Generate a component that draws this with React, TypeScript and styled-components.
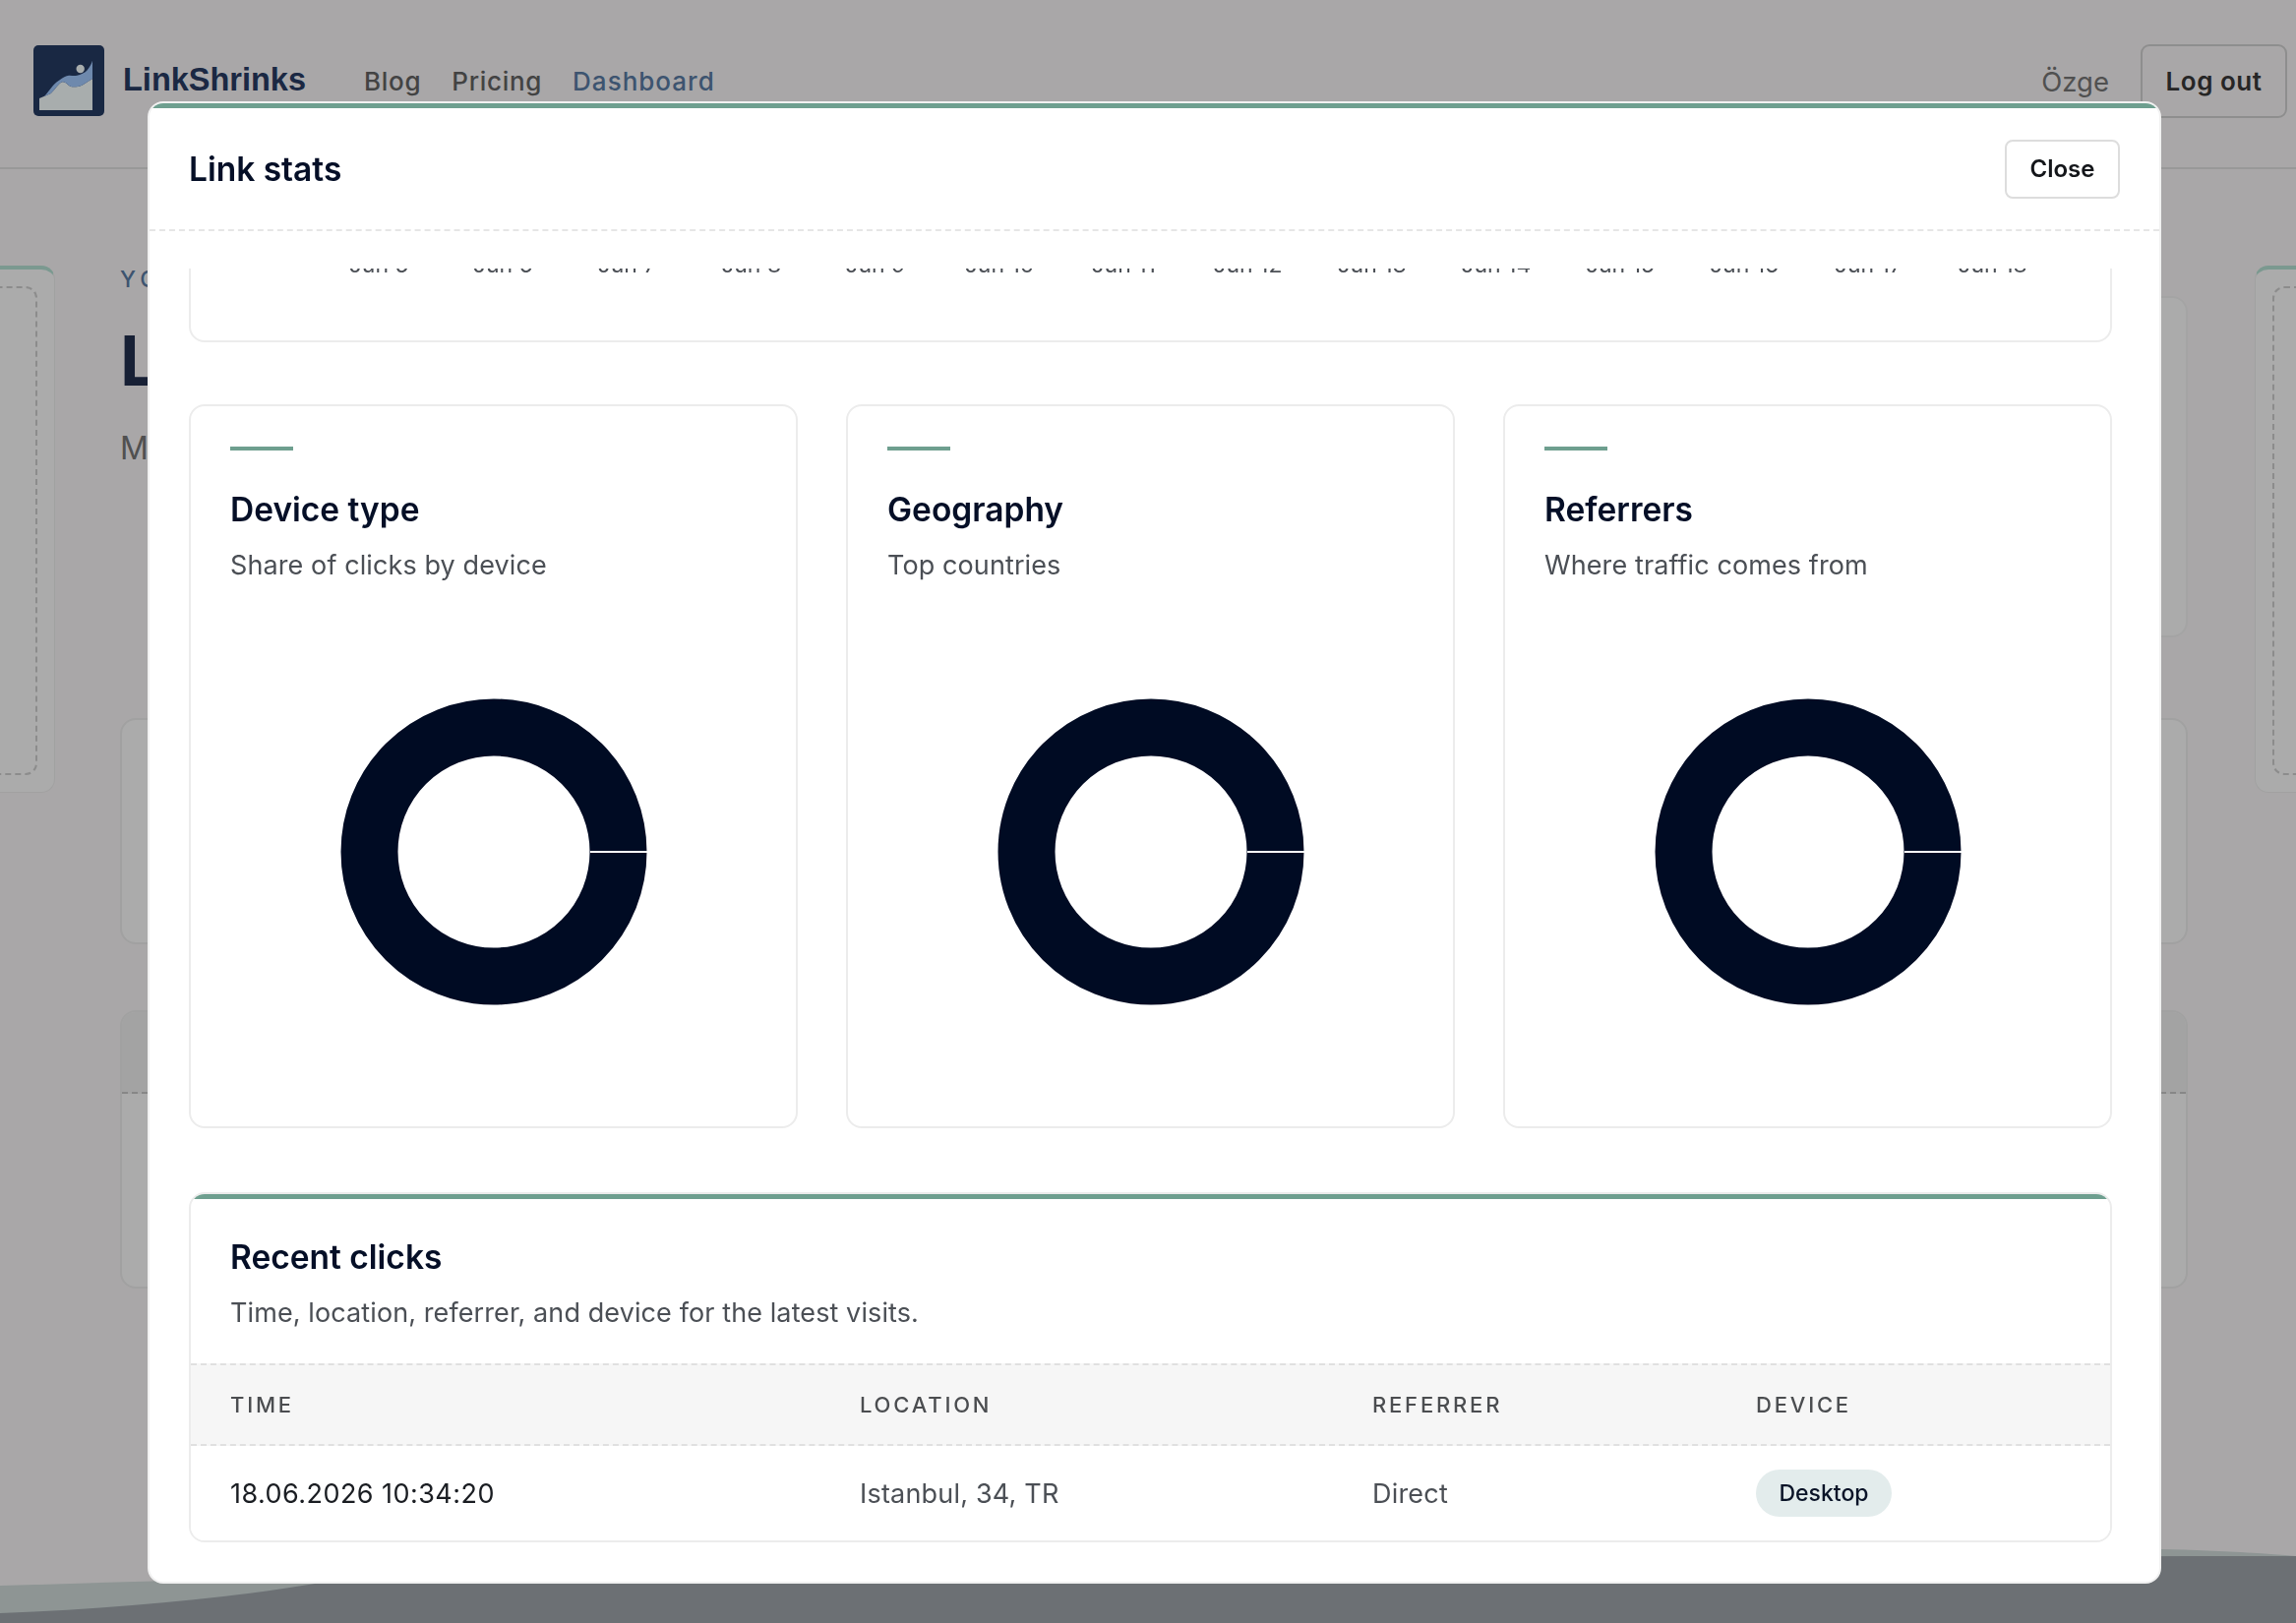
import * as React from 'react';
import styled, { createGlobalStyle } from 'styled-components';

const GlobalStyle = createGlobalStyle`
  html, body {
    margin: 0;
    padding: 0;
    background: #faf7f8;
  }

  body {
    font-family: Inter, "Noto Sans", sans-serif;
  }

  * {
    box-sizing: border-box;
  }
`;

const Page = styled.div`
  display: flex;
  flex-direction: column;
  width: 2334px;
  height: 1650px;
  overflow: hidden;
  background: #faf7f8;
`;

const Header = styled.header`
  display: flex;
  align-items: center;
  flex: none;
  height: 172px;
  padding: 0 9px 6px 34px;
  border-bottom: 2px solid #e1e1e1;
`;

const Brand = styled.div`
  display: flex;
  align-items: center;
  gap: 19px;
  margin-right: 59px;
`;

const BrandName = styled.span`
  margin-top: -2px;
  font-family: "Liberation Sans", Arial, sans-serif;
  font-size: 32.5px;
  font-weight: 700;
  color: #283b63;
`;

const Nav = styled.nav`
  display: flex;
  gap: 31px;
  margin-top: 1px;
  flex: 1;
`;

const NavLink = styled.a<{ $active?: boolean }>`
  font-size: 26px;
  font-weight: 500;
  letter-spacing: ${(p) => (p.$active ? '1px' : '0.7px')};
  color: ${(p) => (p.$active ? '#5b7ca5' : '#636363')};
`;

const UserName = styled.span`
  margin: 2px 32px 0 0;
  font-size: 27.5px;
  color: #767676;
`;

const LogoutButton = styled.button`
  width: 149px;
  height: 75px;
  border: 2px solid #d2d2d2;
  border-radius: 9px;
  background: transparent;
  font-family: inherit;
  font-size: 26px;
  font-weight: 600;
  letter-spacing: 0.5px;
  color: #383838;
`;

const Layout = styled.div`
  display: flex;
  align-items: flex-start;
  flex: 1;
  min-height: 0;
  padding-top: 98px;
`;

const Sidebar = styled.aside<{ $side: 'left' | 'right' }>`
  flex: none;
  width: 300px;
  height: 536px;
  padding: 17px 17px 17px;
  margin: ${(p) => (p.$side === 'left' ? '0 66px 0 -244px' : '0 -258px 0 68px')};
  border: 1px solid #eeeeee;
  border-top: 4px solid #b5e2d4;
  border-radius: 14px;
  background: #fcfcfc;
`;

const SidebarSlot = styled.div`
  height: 100%;
  border: 2px dashed #cfcfcf;
  border-radius: 12px;
`;

const Main = styled.main`
  flex: 1;
  min-width: 0;
`;

const HeroRow = styled.div`
  display: flex;
  justify-content: space-between;
  height: 460px;
`;

const HeroText = styled.div``;

const Eyebrow = styled.div`
  font-size: 23px;
  font-weight: 500;
  letter-spacing: 5px;
  color: #5b7ca5;
`;

const HeroTitle = styled.h1`
  margin: 27px 0 0;
  font-size: 70px;
  font-weight: 700;
  line-height: 84px;
  color: #22304f;
`;

const HeroNote = styled.p`
  margin: 27px 0 0;
  font-size: 32px;
  color: #767676;
`;

const HeroPanel = styled.div`
  width: 420px;
  height: 347px;
  margin-top: 31px;
  border: 2px solid #f2f2f2;
  border-radius: 16px;
  background: #fdfdfd;
`;

const BackCard = styled.div<{ $height: number; $gap: number }>`
  height: ${(p) => p.$height}px;
  margin-top: ${(p) => p.$gap}px;
  border: 2px solid #ededed;
  border-radius: 16px;
  background: #fcfcfc;
  overflow: hidden;
`;

const BackCardHead = styled.div`
  height: 83px;
  border-bottom: 2px dashed #c8c8c8;
  background: #f0f0f0;
`;

const WaveFooter = styled.footer`
  flex: none;
  height: 80px;

  svg {
    display: block;
  }
`;

const Backdrop = styled.div`
  position: fixed;
  inset: 0;
  display: flex;
  padding: 103px 137px 40px 150px;
  background: rgba(0, 0, 0, 0.32);
`;

const Modal = styled.div`
  display: flex;
  flex-direction: column;
  width: 100%;
  border: 2px solid #f1f1f1;
  border-radius: 16px;
  background: #fff;
  overflow: hidden;
`;

const AccentRule = styled.div`
  flex: none;
  height: 5px;
  background: #6e9f8f;
`;

const ModalHeader = styled.div`
  display: flex;
  align-items: center;
  justify-content: space-between;
  flex: none;
  height: 125px;
  padding: 0 40px;
  border-bottom: 2px dashed #e6e6e6;
`;

const ModalTitle = styled.h2`
  margin: 0;
  font-size: 33.5px;
  font-weight: 600;
  color: #050f27;
`;

const CloseButton = styled.button`
  width: 117px;
  height: 60px;
  border: 2px solid #dddddd;
  border-radius: 8px;
  background: #fff;
  font-family: inherit;
  font-size: 24px;
  font-weight: 600;
  color: #14161a;
`;

const ModalBody = styled.div`
  flex: 1;
  min-height: 0;
  margin: 38px 48px 0 40px;
  overflow: hidden;
`;

const TrendCard = styled.div`
  margin-top: -31px;
  height: 106px;
  padding-top: 13px;
  border: 2px solid #ececec;
  border-radius: 16px;
`;

const AxisRow = styled.div`
  display: grid;
  grid-template-columns: repeat(14, 126.2px);
  padding-left: 128px;
  font-size: 23px;
  line-height: 24px;
  text-align: center;
  color: #4b4f55;
`;

const BreakdownGrid = styled.div`
  display: grid;
  grid-template-columns: repeat(3, 1fr);
  gap: 49px;
  margin-top: 63px;
`;

const BreakdownCard = styled.section`
  height: 736px;
  padding: 41px 40px 0;
  border: 2px solid #ececec;
  border-radius: 16px;
`;

const CardTick = styled.div`
  width: 64px;
  height: 4px;
  margin-bottom: 39px;
  background: #6e9f8f;
`;

const CardTitle = styled.h3`
  margin: 0;
  font-size: 33.5px;
  font-weight: 600;
  line-height: 42px;
  color: #050f27;
`;

const CardNote = styled.p`
  margin: 18px 0 0;
  font-size: 27px;
  line-height: 36px;
  letter-spacing: 0.1px;
  color: #4b4f55;
`;

const DonutSlot = styled.div`
  display: flex;
  justify-content: center;
  margin-top: 117px;

  svg {
    display: block;
  }
`;

const ClicksCard = styled.section`
  margin-top: 65px;
  border: 2px solid #ececec;
  border-radius: 16px;
  overflow: hidden;
`;

const ClicksIntro = styled.div`
  height: 167px;
  padding: 38px 40px 0;
`;

const Row = styled.div<{ $head?: boolean }>`
  display: grid;
  grid-template-columns: 640px 521px 390px 1fr;
  align-items: center;
  padding: 0 40px;
  height: ${(p) => (p.$head ? '84px' : '96px')};
  border-top: ${(p) => (p.$head ? '2px dashed #e0e0e0' : 'none')};
  border-bottom: ${(p) => (p.$head ? '2px dashed #e0e0e0' : 'none')};
  background: ${(p) => (p.$head ? '#f6f6f6' : '#fff')};
`;

const HeadCell = styled.div`
  font-size: 22px;
  font-weight: 500;
  letter-spacing: 2.8px;
  color: #4b4d50;
`;

const Cell = styled.div<{ $strong?: boolean }>`
  font-size: 27px;
  letter-spacing: ${(p) => (p.$strong ? '0.45px' : '0.2px')};
  color: ${(p) => (p.$strong ? '#1a1d22' : '#4b4f55')};
`;

const Badge = styled.span`
  display: inline-flex;
  align-items: center;
  justify-content: center;
  width: 138px;
  height: 48px;
  border-radius: 24px;
  background: #e3ecec;
  font-size: 23px;
  font-weight: 500;
  color: #0a1428;
`;

const days = [5, 6, 7, 8, 9, 10, 11, 12, 13, 14, 15, 16, 17, 18];

const breakdowns = [
  { title: 'Device type', note: 'Share of clicks by device' },
  { title: 'Geography', note: 'Top countries' },
  { title: 'Referrers', note: 'Where traffic comes from' },
];

function Logo() {
  return (
    <svg width="72" height="72" viewBox="0 0 72 72">
      <rect width="72" height="72" rx="5" fill="#263b64" />
      <path
        d="M6 66V54L17.7 49C22 45 25 39 29.3 37.3C33 36.5 36 42.3 39.3 42.3C43 42.3 46 42.5 49.3 40.7C53 38.5 57 36 60 34V66Z"
        fill="#f8ffff"
      />
      <path
        d="M11 52C16 47 20 39 26 35.7C30 33 33 31 36 30.7C39 30.5 41 31.5 44.3 30.7C48 29.8 52 28 54.3 25.7C57 22.5 59 19 60 15.7V34C57 36 53 38.5 49.3 40.7C46 42.5 43 42.3 39.3 42.3C36 42.3 33 36.5 29.3 37.3C25 39 22 45 17.7 49Z"
        fill="#a2caff"
      />
      <circle cx="47.7" cy="24" r="4.2" fill="#f8ffff" />
    </svg>
  );
}

function Donut() {
  return (
    <svg width="312" height="312" viewBox="0 0 312 312">
      <circle cx="156" cy="156" r="126.5" fill="none" stroke="#000b23" strokeWidth="58" />
      <line x1="254" y1="156" x2="313" y2="156" stroke="#fff" strokeWidth="2" />
    </svg>
  );
}

export default function App() {
  return (
    <>
      <GlobalStyle />
      <Page>
        <Header>
          <Brand>
            <Logo />
            <BrandName>LinkShrinks</BrandName>
          </Brand>
          <Nav>
            <NavLink>Blog</NavLink>
            <NavLink>Pricing</NavLink>
            <NavLink $active>Dashboard</NavLink>
          </Nav>
          <UserName>Özge</UserName>
          <LogoutButton>Log out</LogoutButton>
        </Header>

        <Layout>
          <Sidebar $side="left">
            <SidebarSlot />
          </Sidebar>
          <Main>
            <HeroRow>
              <HeroText>
                <Eyebrow>YOUR LINKS</Eyebrow>
                <HeroTitle>Links</HeroTitle>
                <HeroNote>Manage your short links</HeroNote>
              </HeroText>
              <HeroPanel />
            </HeroRow>
            <BackCard $height={230} $gap={0} />
            <BackCard $height={283} $gap={67}>
              <BackCardHead />
            </BackCard>
          </Main>
          <Sidebar $side="right">
            <SidebarSlot />
          </Sidebar>
        </Layout>

        <WaveFooter>
          <svg width="2334" height="80" viewBox="0 0 2334 80">
            <path d="M0 42C700 22 1500 0 2197 5C2250 6 2300 9 2334 12V80H0Z" fill="#d1dcdb" />
            <path d="M0 70C120 65 230 55 320 40C900 20 1700 12 2334 12V80H0Z" fill="#9fa6ac" />
          </svg>
        </WaveFooter>

        <Backdrop>
          <Modal>
            <AccentRule />
            <ModalHeader>
              <ModalTitle>Link stats</ModalTitle>
              <CloseButton>Close</CloseButton>
            </ModalHeader>
            <ModalBody>
              <TrendCard>
                <AxisRow>
                  {days.map((d) => (
                    <span key={d}>Jun {d}</span>
                  ))}
                </AxisRow>
              </TrendCard>

              <BreakdownGrid>
                {breakdowns.map((b) => (
                  <BreakdownCard key={b.title}>
                    <CardTick />
                    <CardTitle>{b.title}</CardTitle>
                    <CardNote>{b.note}</CardNote>
                    <DonutSlot>
                      <Donut />
                    </DonutSlot>
                  </BreakdownCard>
                ))}
              </BreakdownGrid>

              <ClicksCard>
                <AccentRule />
                <ClicksIntro>
                  <CardTitle>Recent clicks</CardTitle>
                  <CardNote>Time, location, referrer, and device for the latest visits.</CardNote>
                </ClicksIntro>
                <Row $head>
                  <HeadCell>TIME</HeadCell>
                  <HeadCell>LOCATION</HeadCell>
                  <HeadCell>REFERRER</HeadCell>
                  <HeadCell>DEVICE</HeadCell>
                </Row>
                <Row>
                  <Cell $strong>18.06.2026 10:34:20</Cell>
                  <Cell>Istanbul, 34, TR</Cell>
                  <Cell>Direct</Cell>
                  <div>
                    <Badge>Desktop</Badge>
                  </div>
                </Row>
              </ClicksCard>
            </ModalBody>
          </Modal>
        </Backdrop>
      </Page>
    </>
  );
}
